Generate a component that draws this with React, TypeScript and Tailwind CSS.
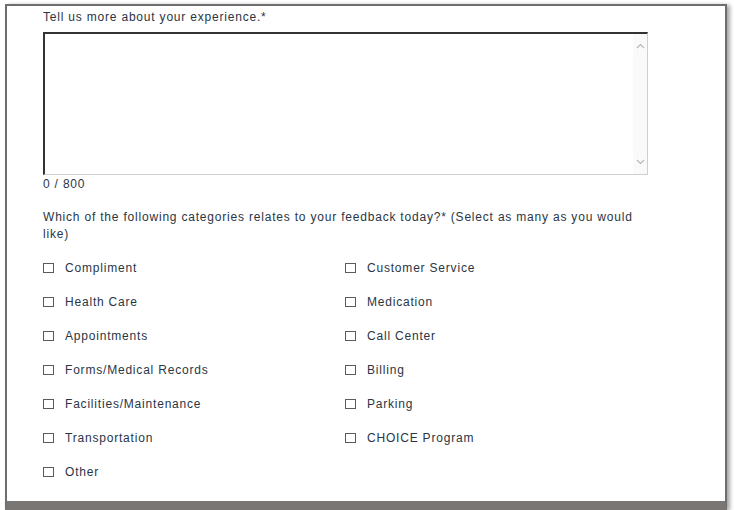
import React from 'react';

const categories = [
  ['Compliment', 'Customer Service'],
  ['Health Care', 'Medication'],
  ['Appointments', 'Call Center'],
  ['Forms/Medical Records', 'Billing'],
  ['Facilities/Maintenance', 'Parking'],
  ['Transportation', 'CHOICE Program'],
  ['Other', ''],
];

const Check: React.FC<{ label: string }> = ({ label }) => (
  <label className="flex items-center h-[34px]">
    <span className="w-[11px] h-[10px] border border-[#5a5a5a] bg-white" />
    <span className="ml-[11px]">{label}</span>
  </label>
);

const App: React.FC = () => {
  return (
    <div
      className="w-[734px] h-[510px] bg-white overflow-hidden pt-[4px] pl-[5px] text-[12px] tracking-[0.8px] text-[#2a3545]"
      style={{ fontFamily: '"Liberation Sans", Arial, sans-serif' }}
    >
      <div className="w-[722px] h-[506px] bg-white border-2 border-b-[9px] border-[#6e6e6e] border-b-[#7a7674] shadow-[3px_1px_4px_rgba(0,0,0,0.35)] pl-[36px] pt-[4px]">
        <div className="leading-[14px]">Tell us more about your experience.*</div>

        <div className="mt-[8px] w-[605px] h-[143px] flex border-t-2 border-l-2 border-[#333] border-r border-b border-r-[#cfcfcf] border-b-[#cfcfcf]">
          <div className="flex-1" />
          <div className="w-[14px] bg-[#fafafa] flex flex-col items-center justify-between py-[9px]">
            <svg width="9" height="6" viewBox="0 0 9 6">
              <path d="M1 5 L4.5 1.5 L8 5" fill="none" stroke="#b8b8b8" strokeWidth="1.2" />
            </svg>
            <svg width="9" height="6" viewBox="0 0 9 6">
              <path d="M1 1 L4.5 4.5 L8 1" fill="none" stroke="#b8b8b8" strokeWidth="1.2" />
            </svg>
          </div>
        </div>

        <div className="leading-[16px] mt-[1px]">0 / 800</div>

        <p className="mt-[17px] w-[605px] leading-[17px]">
          Which of the following categories relates to your feedback today?* (Select as many as you would like)
        </p>

        <div className="mt-[8px] grid grid-cols-[302px_1fr]">
          {categories.map(([a, b]) => (
            <React.Fragment key={a}>
              <Check label={a} />
              {b ? <Check label={b} /> : <div />}
            </React.Fragment>
          ))}
        </div>
      </div>
    </div>
  );
};

export default App;
